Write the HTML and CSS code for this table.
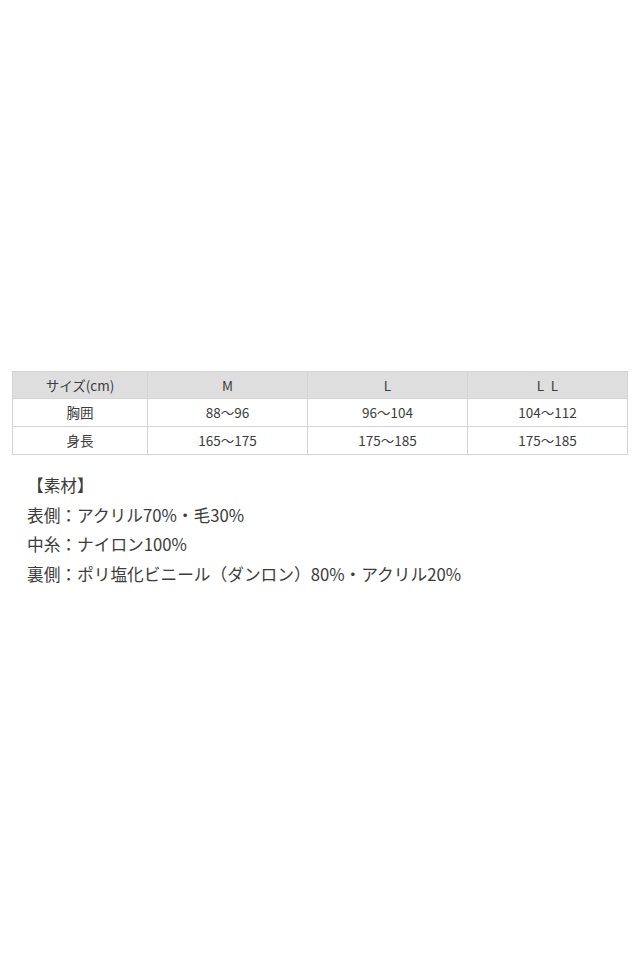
FILE: index.html
```html
<!DOCTYPE html>
<html lang="ja">
<head>
<meta charset="utf-8">
<link rel="stylesheet" href="styles.css">
</head>
<body>
<main class="page">
  <table class="size-table">
    <thead>
      <tr>
        <th class="col-label">サイズ(cm)</th>
        <th>M</th>
        <th>L</th>
        <th>L&ensp;L</th>
      </tr>
    </thead>
    <tbody>
      <tr>
        <td>胸囲</td>
        <td>88～96</td>
        <td>96～104</td>
        <td>104～112</td>
      </tr>
      <tr>
        <td>身長</td>
        <td>165～175</td>
        <td>175～185</td>
        <td>175～185</td>
      </tr>
    </tbody>
  </table>
  <div class="material">
    <p>【素材】</p>
    <p>表側：アクリル70%・毛30%</p>
    <p>中糸：ナイロン100%</p>
    <p>裏側：ポリ塩化ビニール（ダンロン）80%・アクリル20%</p>
  </div>
</main>
</body>
</html>
```
FILE: styles.css
```css
html, body {
  margin: 0;
  padding: 0;
  background: #ffffff;
}
body {
  font-family: "Noto Sans CJK JP", "Noto Sans", sans-serif;
  color: #3c3c3c;
}
.page {
  padding: 371px 12px 0 12px;
}
.size-table {
  width: 616px;
  border-collapse: collapse;
  table-layout: fixed;
  font-size: 13.5px;
}
.size-table th,
.size-table td {
  border: 1px solid #d4d4d4;
  text-align: center;
  font-weight: normal;
  padding: 0;
}
.size-table th {
  background: #dedede;
  height: 26px;
  line-height: 26px;
}
.size-table td {
  height: 27px;
  line-height: 27px;
}
.size-table .col-label {
  width: 134px;
}
.material {
  padding: 16px 0 0 15px;
  font-size: 16.7px;
  line-height: 29.5px;
}
.material p {
  margin: 0;
}
```
